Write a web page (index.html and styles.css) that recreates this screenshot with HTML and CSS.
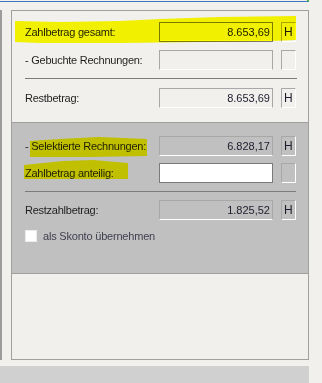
FILE: index.html
```html
<!DOCTYPE html>
<html lang="de">
<head>
    <meta charset="UTF-8">
    <meta name="viewport" content="width=device-width, initial-scale=1.0">
    <title>Zahlbetrag</title>
    <link rel="stylesheet" href="styles.css">
</head>
<body>
    <div class="screen">
        <div class="tabline"></div>

        <div class="body-row">
            <div class="panel">
                <div class="section section-top">
                    <div class="row">
                        <span class="label">Zahlbetrag gesamt:</span>
                        <div class="field field-focus">8.653,69</div>
                        <div class="flag">H</div>
                    </div>
                    <div class="row">
                        <span class="label">- Gebuchte Rechnungen:</span>
                        <div class="field"></div>
                        <div class="flag"></div>
                    </div>
                    <div class="separator"></div>
                    <div class="row">
                        <span class="label">Restbetrag:</span>
                        <div class="field">8.653,69</div>
                        <div class="flag">H</div>
                    </div>
                </div>

                <div class="section section-gray">
                    <div class="row">
                        <span class="label">- Selektierte Rechnungen:</span>
                        <div class="field">6.828,17</div>
                        <div class="flag">H</div>
                    </div>
                    <div class="row">
                        <span class="label">Zahlbetrag anteilig:</span>
                        <div class="field field-edit"></div>
                        <div class="flag"></div>
                    </div>
                    <div class="separator"></div>
                    <div class="row">
                        <span class="label">Restzahlbetrag:</span>
                        <div class="field">1.825,52</div>
                        <div class="flag">H</div>
                    </div>
                    <label class="check">
                        <span class="box"></span>
                        <span class="check-text">als Skonto übernehmen</span>
                    </label>
                </div>

                <div class="section section-rest"></div>
            </div>
        </div>

        <div class="statusbar"></div>

        <!-- marker strokes drawn over the form -->
        <div class="marker marker-total"></div>
        <div class="marker marker-selected"></div>
        <div class="marker marker-share"></div>
    </div>
</body>
</html>
```

FILE: styles.css
```css
* {
    box-sizing: border-box;
}
body {
    margin: 0;
    background: #f1f0ed;
    font-family: "Liberation Sans", Arial, sans-serif;
    font-size: 11px;
    color: #1f1f1f;
}
.screen {
    position: relative;
    width: 322px;
    height: 383px;
    overflow: hidden;
}
.tabline {
    width: 309px;
    height: 2px;
    border-bottom: 1px solid #3b78c0;
    border-right: 2px solid #46b446;
}
.body-row {
    margin-top: 8px;
    height: 350px;
    border-left: 2px solid #9c9c9c;
    padding-left: 9px;
}
.panel {
    width: 298px;
    height: 350px;
    border: 1px solid #a0a0a0;
    display: flex;
    flex-direction: column;
}
.section {
    padding: 0 12px 0 13px;
    display: flex;
    flex-direction: column;
}
.section-top {
    height: 111px;
    padding-top: 11px;
    gap: 8px;
}
.section-top .separator {
    margin-bottom: 1px;
}
.section-gray {
    background: #c0c0c0;
    border-top: 1px solid #a0a0a0;
    border-bottom: 1px solid #a0a0a0;
    height: 152px;
    padding-top: 13px;
    gap: 7px;
}
.section-gray .separator {
    margin: 1px 0;
}
.section-rest {
    flex: 1;
}
.row {
    display: flex;
    align-items: center;
    gap: 8px;
    height: 20px;
}
.label {
    flex: 1;
    white-space: nowrap;
    letter-spacing: -0.25px;
}
.field {
    width: 114px;
    height: 20px;
    border: 1px solid #a8a8a8;
    border-bottom-color: #ffffff;
    text-align: right;
    padding: 0 2px;
    line-height: 18px;
    color: #1c1c2c;
}
.field-focus {
    border: 1px solid #7a7a7a;
    box-shadow: inset 0 -1px 0 #ffffff;
}
.field-edit {
    background: #ffffff;
    border: 1px solid #7a7a7a;
}
.flag {
    width: 15px;
    height: 20px;
    border: 1px solid #a8a8a8;
    border-right-color: #ffffff;
    border-bottom-color: #ffffff;
    padding-left: 2px;
    line-height: 18px;
    font-size: 12px;
    color: #1c1c2c;
}
.separator {
    height: 1px;
    margin-right: -1px;
    background: #7c7c7c;
}
.check {
    display: flex;
    align-items: center;
    gap: 6px;
    margin-top: 3px;
    letter-spacing: -0.2px;
}
.box {
    width: 12px;
    height: 12px;
    background: #ffffff;
    border: 1px solid #ececec;
}
.check-text {
    color: #404050;
}
.statusbar {
    margin-top: 6px;
    width: 309px;
    height: 17px;
    background: #d0d0d0;
}
.marker {
    position: absolute;
    background: #ffff00;
    mix-blend-mode: multiply;
}
.marker-total {
    left: 14px;
    top: 16px;
    width: 283px;
    height: 28px;
    clip-path: polygon(1px 5px, 46px 6px, 106px 5px, 146px 3px, 206px 1px, 282px 0, 282px 24px, 258px 25px, 186px 26px, 106px 27px, 26px 27px, 1px 26px);
}
.marker-selected {
    left: 29px;
    top: 136px;
    width: 119px;
    height: 22px;
    clip-path: polygon(1px 5px, 30px 3px, 70px 1px, 118px 3px, 118px 20px, 60px 21px, 1px 21px);
}
.marker-share {
    left: 23px;
    top: 159px;
    width: 106px;
    height: 21px;
    clip-path: polygon(1px 6px, 40px 2px, 70px 1px, 105px 4px, 105px 20px, 1px 20px);
}
```
